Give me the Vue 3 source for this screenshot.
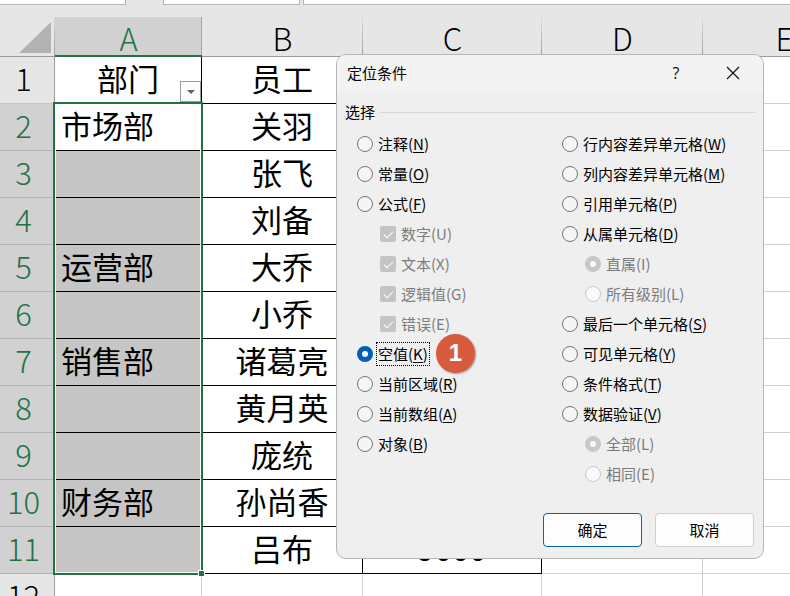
<script setup>
import { ref } from 'vue'

const columns = ['A', 'B', 'C', 'D', 'E']
const rows = [
  ['部门', '员工', ''],
  ['市场部', '关羽', ''],
  ['', '张飞', ''],
  ['', '刘备', ''],
  ['运营部', '大乔', ''],
  ['', '小乔', ''],
  ['销售部', '诸葛亮', ''],
  ['', '黄月英', ''],
  ['', '庞统', ''],
  ['财务部', '孙尚香', ''],
  ['', '吕布', '9000'],
  ['', '', '']
]

const leftOptions = [
  { text: '注释', key: 'N' },
  { text: '常量', key: 'O' },
  { text: '公式', key: 'F' },
  { text: '数字', key: 'U', check: true },
  { text: '文本', key: 'X', check: true },
  { text: '逻辑值', key: 'G', check: true },
  { text: '错误', key: 'E', check: true },
  { text: '空值', key: 'K', badge: '1' },
  { text: '当前区域', key: 'R' },
  { text: '当前数组', key: 'A' },
  { text: '对象', key: 'B' }
]
const rightOptions = [
  { text: '行内容差异单元格', key: 'W' },
  { text: '列内容差异单元格', key: 'M' },
  { text: '引用单元格', key: 'P' },
  { text: '从属单元格', key: 'D' },
  { text: '直属', key: 'I', group: 'level', on: true },
  { text: '所有级别', key: 'L', group: 'level' },
  { text: '最后一个单元格', key: 'S' },
  { text: '可见单元格', key: 'Y' },
  { text: '条件格式', key: 'T' },
  { text: '数据验证', key: 'V' },
  { text: '全部', key: 'L', group: 'scope', on: true },
  { text: '相同', key: 'E', group: 'scope' }
]
const optionColumns = [leftOptions, rightOptions]
const selected = ref('K')
</script>

<template>
  <main class="app">
    <div class="formula-bar">
      <div class="bar-box name-box"></div>
      <div class="bar-box tools-box"></div>
      <div class="bar-box formula-box"></div>
    </div>

    <div class="sheet">
      <table>
        <colgroup>
          <col class="col-head" />
          <col class="col-a" />
          <col class="col-b" />
          <col class="col-c" />
          <col class="col-d" />
          <col class="col-e" />
        </colgroup>
        <thead>
          <tr>
            <th class="corner">
              <svg width="32" height="31" viewBox="0 0 32 31"><path d="M32 0V31H0Z" fill="#b3b3b3" /></svg>
            </th>
            <th v-for="c in columns" :key="c" scope="col" :class="{ active: c === 'A' }">{{ c }}</th>
          </tr>
        </thead>
        <tbody>
          <tr v-for="(row, r) in rows" :key="r" :class="{ picked: r > 0 && r < 11 }">
            <th scope="row">{{ r + 1 }}</th>
            <td
              v-for="(c, i) in columns"
              :key="c"
              :class="{ boxed: i < 3 && r < 11, dept: i === 0 && r > 0, shaded: i === 0 && r > 1 && r < 11 }"
            >
              {{ row[i] }}
              <button v-if="r === 0 && i === 0" class="filter" type="button" aria-label="筛选">
                <svg width="8" height="4" viewBox="0 0 8 4"><path d="M0 0H8L4 4Z" fill="#5c6068" /></svg>
              </button>
            </td>
          </tr>
        </tbody>
      </table>
      <div class="selection"><span class="handle"></span></div>
    </div>

    <section class="dialog" role="dialog" aria-labelledby="dialog-title">
      <header class="title-bar">
        <h1 id="dialog-title">定位条件</h1>
        <button class="title-btn help" type="button">?</button>
        <button class="title-btn" type="button" aria-label="关闭">
          <svg width="14" height="14" viewBox="0 0 14 14">
            <path d="M1 1L13 13M13 1L1 13" stroke="#111" stroke-width="1.2" fill="none" />
          </svg>
        </button>
      </header>
      <form class="content" @submit.prevent>
        <fieldset>
          <legend><span>选择</span></legend>
          <div class="options">
            <div v-for="(list, n) in optionColumns" :key="n" class="option-col">
              <label
                v-for="o in list"
                :key="o.text"
                class="option"
                :class="{ sub: o.check || o.group, focused: o.key === 'K' }"
              >
                <input v-if="o.check" type="checkbox" checked disabled />
                <input v-else-if="o.group" type="radio" :name="o.group" :checked="o.on" disabled />
                <input v-else v-model="selected" type="radio" name="target" :value="o.key" />
                <span class="caption">{{ o.text }}(<span class="key">{{ o.key }}</span>)</span>
                <span v-if="o.badge" class="badge">{{ o.badge }}</span>
              </label>
            </div>
          </div>
        </fieldset>
        <div class="actions">
          <button class="action primary" type="submit">确定</button>
          <button class="action" type="button">取消</button>
        </div>
      </form>
    </section>
  </main>
</template>

<style>
body {
  margin: 0;
  background: #fff;
}
</style>

<style scoped>
* {
  box-sizing: border-box;
}
.app {
  position: relative;
  height: 100vh;
  overflow: hidden;
  background: #fff;
  color: #000;
  font-family: "Noto Sans CJK SC", sans-serif;
}
.formula-bar {
  display: flex;
  height: 17px;
  padding-bottom: 12px;
  background: #e6e6e6;
}
.bar-box {
  background: #fff;
  border: 0 solid #b4b4b4;
  border-bottom-width: 1px;
}
.name-box {
  width: 126px;
  border-right-width: 1px;
}
.tools-box {
  width: 137px;
  margin: 0 3px 0 37px;
  border-left-width: 1px;
  border-right-width: 1px;
}
.formula-box {
  flex: 1;
  border-left-width: 1px;
}
.sheet {
  position: relative;
}
table {
  width: 866px;
  table-layout: fixed;
  border-collapse: separate;
  border-spacing: 0;
  font-size: 31px;
  line-height: 42px;
}
.col-head { width: 55px; }
.col-a { width: 147px; }
.col-b { width: 161px; }
.col-c { width: 179px; }
.col-d { width: 161px; }
.col-e { width: 163px; }
th,
td {
  position: relative;
  height: 47px;
  padding: 0;
  text-align: center;
  vertical-align: top;
  white-space: nowrap;
  border: 0 solid #d0d0d0;
  border-right-width: 1px;
  border-bottom-width: 1px;
}
th {
  font-weight: 300;
  background: #e6e6e6;
}
thead th {
  height: 40px;
  padding-top: 3px;
  line-height: 36px;
  border-right: 0;
  border-bottom-color: #9b9b9b;
  background: linear-gradient(#dedede, #9b9b9b) right / 1px 100% no-repeat #e6e6e6;
}
thead th.active {
  color: #217346;
  border-bottom: 2px solid #217346;
  line-height: 35px;
  background: linear-gradient(#a6a6a6, #a6a6a6) right / 1px 100% no-repeat #d1d1d1;
}
.corner svg {
  display: block;
  margin: 2px 0 0 19px;
}
tbody th {
  padding-right: 7px;
  border-color: #c4c4c4;
  border-right-color: #9b9b9b;
}
.picked th {
  color: #217346;
  background: #d1d1d1;
  border-bottom-color: #b4b4b4;
}
td.boxed {
  border-color: #000;
}
td.dept {
  padding-left: 6px;
  text-align: left;
}
td.shaded {
  background: #c6c6c6;
}
.filter {
  position: absolute;
  right: 0;
  bottom: 1px;
  display: flex;
  align-items: center;
  justify-content: center;
  width: 21px;
  height: 21px;
  padding: 0;
  border: 1px solid #9a9da3;
  background: #fdfdfd;
}
.selection {
  position: absolute;
  top: 85px;
  left: 53px;
  width: 150px;
  height: 473px;
  border: 2px solid #217346;
  box-shadow: inset 0 0 0 1px #fff;
  pointer-events: none;
}
.handle {
  position: absolute;
  right: -4px;
  bottom: -4px;
  width: 7px;
  height: 7px;
  border: 1px solid #fff;
  background: #217346;
}
.dialog {
  position: absolute;
  top: 54px;
  left: 336px;
  width: 428px;
  overflow: hidden;
  border: 1px solid #b6b6b6;
  border-radius: 10px;
  background: #efefef;
  font-size: 15px;
  line-height: 22px;
}
.title-bar {
  display: flex;
  align-items: center;
  height: 37px;
  padding: 0 8px 2px 10px;
  background: #f3f3f3;
}
h1 {
  flex: 1;
  margin: 0;
  font-size: 15px;
  font-weight: 400;
}
.title-btn {
  display: flex;
  align-items: center;
  justify-content: center;
  width: 44px;
  height: 30px;
  padding: 0;
  border: 0;
  background: none;
  color: #111;
}
.help {
  margin-right: 13px;
  font: 16px "Open Sans", sans-serif;
}
.content {
  padding: 9px 8px 11px;
}
fieldset {
  min-width: 0;
  margin: 0;
  padding: 0;
  border: 0;
}
legend {
  display: flex;
  align-items: center;
  gap: 5px;
  width: 100%;
  padding: 0;
}
legend::after {
  content: "";
  flex: 1;
  height: 1px;
  background: #d6d6d6;
}
.options {
  display: grid;
  grid-template-columns: 205px 1fr;
  padding: 6px 0 0 12px;
}
.option {
  position: relative;
  display: flex;
  align-items: center;
  height: 30px;
  white-space: nowrap;
}
.sub {
  padding-left: 23px;
  color: #7c7c7c;
}
.key {
  text-decoration: underline;
  text-underline-offset: 2px;
}
.sub .key {
  text-decoration: none;
}
.caption {
  margin-left: 3px;
  padding: 0 1px;
  border: 1px dotted transparent;
}
.focused .caption {
  border-color: #000;
}
input {
  flex: none;
  width: 16px;
  height: 16px;
  margin: 0;
  appearance: none;
  border: 1px solid #767676;
  border-radius: 50%;
  background: #f5f5f5;
}
input:checked {
  border: 5px solid #005fb8;
  background: #fff;
}
input:disabled {
  border-color: #c8c8c8;
  background: #fafafa;
}
input[type="checkbox"] {
  border: 0;
  border-radius: 2px;
  background: #c4c4c4;
}
input[type="checkbox"]::after {
  content: "";
  display: block;
  width: 8px;
  height: 4px;
  margin: 5px 0 0 4px;
  border: solid #fff;
  border-width: 0 0 1px 1px;
  transform: rotate(-45deg);
}
.badge {
  position: absolute;
  left: 79px;
  top: -5px;
  width: 39px;
  height: 39px;
  border-radius: 50%;
  background: #d85b3e;
  box-shadow: 1px 1px 2px rgba(0, 0, 0, 0.35);
  color: #fff;
  font: bold 24px/37px "Liberation Sans", sans-serif;
  text-align: center;
}
.actions {
  display: flex;
  justify-content: flex-end;
  gap: 13px;
  padding: 24px 1px 0 0;
}
.action {
  width: 99px;
  height: 34px;
  padding: 0;
  border: 1px solid #cfcfcf;
  border-radius: 4px;
  background: #fdfdfd;
  color: #000;
  font: inherit;
}
.primary {
  border-color: #0067b0;
}
</style>
